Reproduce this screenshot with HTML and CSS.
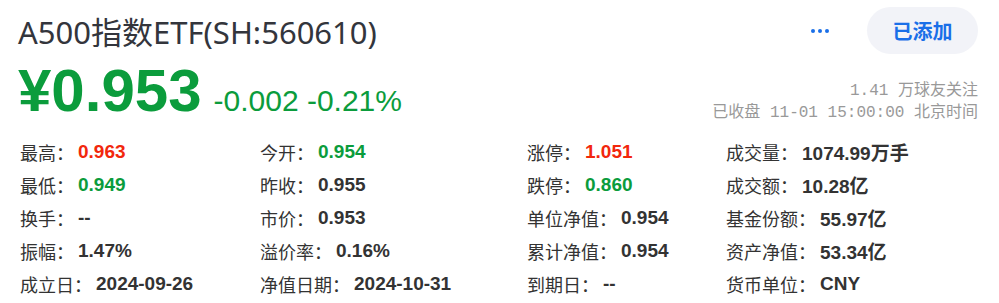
FILE: index.html
```html
<!DOCTYPE html>
<html lang="zh-CN">
<head>
  <meta charset="UTF-8" />
  <meta name="viewport" content="width=device-width, initial-scale=1.0" />
  <title>A500指数ETF(SH:560610)</title>
  <link rel="stylesheet" href="styles.css">
</head>
<body>
  <div class="quote">
    <div class="quote-head">
      <h1 class="name">A500指数ETF(SH:560610)</h1>
      <div class="actions">
        <span class="more"><i></i><i></i><i></i></span>
        <button class="follow">已添加</button>
      </div>
    </div>

    <div class="quote-price">
      <div class="price-main">
        <span class="price">¥0.953</span>
        <span class="change">-0.002 -0.21%</span>
      </div>
      <div class="meta">
        <div>1.41 万球友关注</div>
        <div>已收盘 11-01 15:00:00 北京时间</div>
      </div>
    </div>

    <div class="stats">
      <div>最高：<b class="up">0.963</b></div>
      <div>今开：<b class="down">0.954</b></div>
      <div>涨停：<b class="up">1.051</b></div>
      <div>成交量：<b>1074.99万手</b></div>

      <div>最低：<b class="down">0.949</b></div>
      <div>昨收：<b>0.955</b></div>
      <div>跌停：<b class="down">0.860</b></div>
      <div>成交额：<b>10.28亿</b></div>

      <div>换手：<b>--</b></div>
      <div>市价：<b>0.953</b></div>
      <div>单位净值：<b>0.954</b></div>
      <div>基金份额：<b>55.97亿</b></div>

      <div>振幅：<b>1.47%</b></div>
      <div>溢价率：<b>0.16%</b></div>
      <div>累计净值：<b>0.954</b></div>
      <div>资产净值：<b>53.34亿</b></div>

      <div>成立日：<b>2024-09-26</b></div>
      <div>净值日期：<b>2024-10-31</b></div>
      <div>到期日：<b>--</b></div>
      <div>货币单位：<b>CNY</b></div>
    </div>
  </div>
</body>
</html>
```

FILE: styles.css
```css
body {
  margin: 0;
  background: #fff;
  color: #333;
  font-family: "Noto Sans", "Noto Sans CJK SC", sans-serif;
}
.quote {
  padding: 7px 21px 0 20px;
}
.quote-head {
  display: flex;
  justify-content: space-between;
  align-items: center;
  height: 47px;
}
.name {
  margin: 0 0 0 -2px;
  font-size: 31px;
  font-weight: normal;
  color: #33353c;
}
.actions {
  display: flex;
  align-items: center;
}
.more {
  display: flex;
  gap: 3px;
  margin-right: 38px;
}
.more i {
  width: 4px;
  height: 4px;
  border-radius: 50%;
  background: #1a6fe8;
}
.follow {
  width: 111px;
  height: 47px;
  border: none;
  border-radius: 24px;
  background: #f2f3f8;
  color: #1a6fe8;
  font-family: "Noto Sans CJK SC", sans-serif;
  font-size: 20px;
  font-weight: bold;
  padding: 0;
}
.quote-price {
  display: flex;
  justify-content: space-between;
  align-items: flex-end;
  margin-top: 7px;
}
.price-main {
  display: flex;
  align-items: baseline;
  color: #0b9c3c;
  font-family: "Liberation Sans", Arial, sans-serif;
}
.price {
  font-size: 60px;
  font-weight: bold;
  line-height: 60px;
  margin-left: -2px;
}
.change {
  font-size: 30px;
  margin-left: 12px;
}
.meta {
  text-align: right;
  font-family: "Liberation Mono", "Noto Sans CJK SC", monospace;
  font-size: 16px;
  line-height: 22px;
  color: #999;
  margin-bottom: -3px;
}
.stats {
  display: grid;
  grid-template-columns: 240px 267px 199px 1fr;
  grid-auto-rows: 33px;
  margin-top: 14px;
  font-family: "Noto Sans CJK SC", sans-serif;
  font-size: 18px;
}
.stats div {
  display: flex;
  align-items: center;
  white-space: nowrap;
}
.stats b {
  font-family: "Liberation Sans", "Noto Sans CJK SC", sans-serif;
  font-size: 19px;
  margin-left: 4px;
}
.stats .up { color: #f2270c; }
.stats .down { color: #0b9c3c; }
```
